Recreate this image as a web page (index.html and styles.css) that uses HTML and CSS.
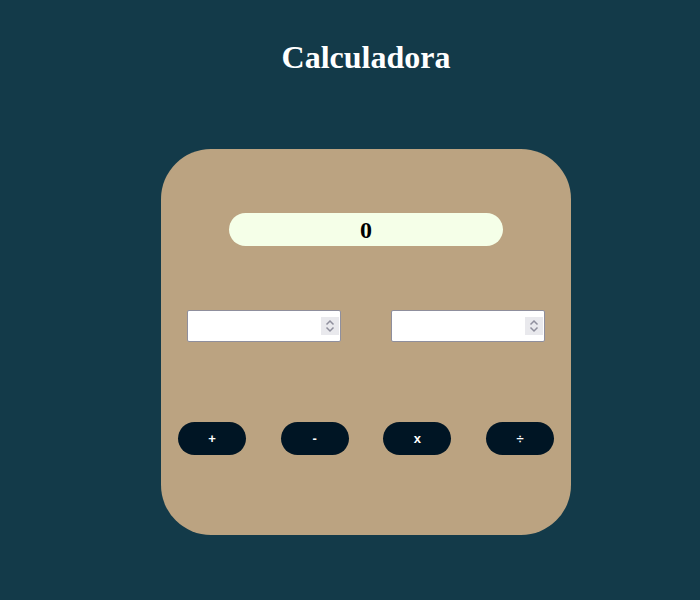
FILE: index.html
```html
<!DOCTYPE html>
<html lang="pt">
<head>
<meta charset="utf-8">
<title>Calculadora</title>
<link rel="stylesheet" href="styles.css">
</head>
<body>
<div class="page">
  <h1 class="title">Calculadora</h1>
  <div class="card">
    <div class="display">0</div>
    <div class="inputs">
      <span class="field">
        <input class="num" type="number">
        <span class="spin"><svg width="18" height="18" viewBox="0 0 18 18"><path d="M5.5 7.5 L9 4 L12.5 7.5 M5.5 10.5 L9 14 L12.5 10.5" fill="none" stroke="#8f8f9d" stroke-width="1.5"/></svg></span>
      </span>
      <span class="field">
        <input class="num" type="number">
        <span class="spin"><svg width="18" height="18" viewBox="0 0 18 18"><path d="M5.5 7.5 L9 4 L12.5 7.5 M5.5 10.5 L9 14 L12.5 10.5" fill="none" stroke="#8f8f9d" stroke-width="1.5"/></svg></span>
      </span>
    </div>
    <div class="ops">
      <button class="op">+</button>
      <button class="op">-</button>
      <button class="op">x</button>
      <button class="op">÷</button>
    </div>
  </div>
</div>
</body>
</html>
```
FILE: styles.css
```css
html, body {
  margin: 0;
  background: #133a49;
}
.page {
  display: flex;
  flex-direction: column;
  align-items: center;
  padding-left: 32px;
  padding-top: 39px;
  font-family: "Liberation Serif", serif;
}
.title {
  margin: 0;
  font-size: 32px;
  line-height: 37px;
  font-weight: bold;
  color: #ffffff;
}
.card {
  margin-top: 73px;
  width: 410px;
  height: 386px;
  box-sizing: border-box;
  padding-top: 64px;
  background: #bba381;
  border-radius: 50px;
  display: flex;
  flex-direction: column;
  align-items: center;
}
.display {
  width: 274px;
  height: 33px;
  border-radius: 17px;
  background: #f5ffe8;
  color: #000;
  font-weight: bold;
  font-size: 24px;
  line-height: 34px;
  text-align: center;
}
.inputs {
  margin-top: 64px;
  display: flex;
  gap: 50px;
}
.field {
  position: relative;
  display: block;
  width: 154px;
  height: 32px;
}
.num {
  display: block;
  width: 154px;
  height: 32px;
  box-sizing: border-box;
  margin: 0;
  border: 1px solid #8f8f9d;
  border-radius: 2px;
  background: #fff;
  padding: 0 24px 0 4px;
  -moz-appearance: textfield;
  appearance: textfield;
}
.num::-webkit-inner-spin-button,
.num::-webkit-outer-spin-button {
  -webkit-appearance: none;
  margin: 0;
}
.spin {
  position: absolute;
  right: 2px;
  top: 7px;
  width: 18px;
  height: 18px;
  background: #e9e9ed;
  pointer-events: none;
}
.spin svg {
  display: block;
}
.ops {
  margin-top: 80px;
  width: 376px;
  display: flex;
  justify-content: space-between;
}
.op {
  width: 68px;
  height: 33px;
  border: none;
  border-radius: 17px;
  background: #001524;
  color: #fff;
  font-family: "Liberation Sans", Arial, sans-serif;
  font-weight: bold;
  font-size: 13px;
  padding: 0;
}
```
